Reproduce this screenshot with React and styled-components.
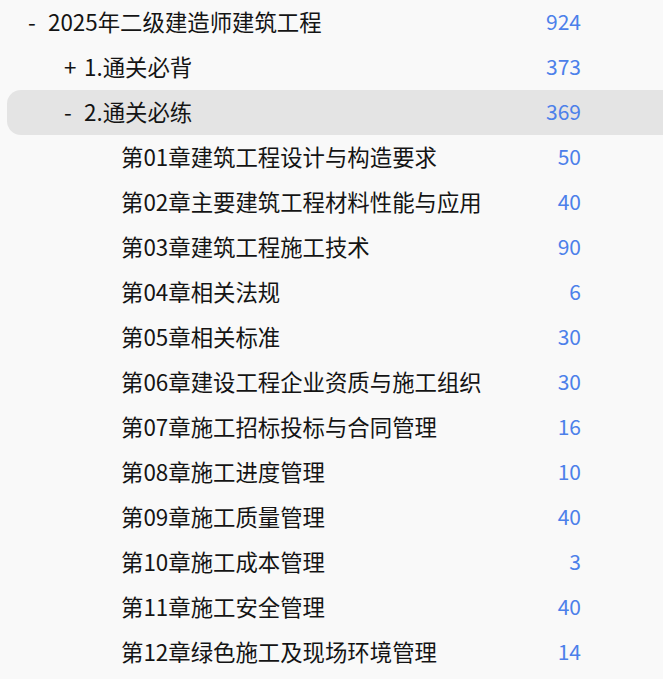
import React from 'react'
import styled, { createGlobalStyle } from 'styled-components'

const GlobalStyle = createGlobalStyle`
  html, body {
    margin: 0;
    padding: 0;
    background: #f9f9f9;
  }
  body {
    font-family: "Noto Sans CJK SC", "Noto Sans", sans-serif;
  }
`

const Tree = styled.ul`
  list-style: none;
  margin: 0;
  padding: 0;
  width: 663px;
  overflow: hidden;
`

const Row = styled.li`
  display: flex;
  align-items: center;
  box-sizing: border-box;
  height: 45px;
  padding-bottom: 4px;
  margin-left: ${p => (p.$active ? '7px' : '0')};
  padding-left: ${p => p.$indent - (p.$active ? 7 : 0)}px;
  padding-right: 82px;
  background: ${p => (p.$active ? '#e4e4e4' : 'transparent')};
  border-radius: ${p => (p.$active ? '14px 0 0 14px' : '0')};
  font-size: 22.4px;
  color: #141414;
`

const Toggle = styled.span`
  width: 20px;
  flex: none;
`

const Label = styled.span`
  flex: 1;
  white-space: nowrap;
`

const Count = styled.span`
  color: #4c80ea;
  font-size: 21px;
`

const chapters = [
  ['第01章建筑工程设计与构造要求', 50],
  ['第02章主要建筑工程材料性能与应用', 40],
  ['第03章建筑工程施工技术', 90],
  ['第04章相关法规', 6],
  ['第05章相关标准', 30],
  ['第06章建设工程企业资质与施工组织', 30],
  ['第07章施工招标投标与合同管理', 16],
  ['第08章施工进度管理', 10],
  ['第09章施工质量管理', 40],
  ['第10章施工成本管理', 3],
  ['第11章施工安全管理', 40],
  ['第12章绿色施工及现场环境管理', 14],
]

const App = () => {
  return (
    <>
      <GlobalStyle />
      <Tree>
        <Row $indent={28}>
          <Toggle>-</Toggle>
          <Label>2025年二级建造师建筑工程</Label>
          <Count>924</Count>
        </Row>
        <Row $indent={64}>
          <Toggle>+</Toggle>
          <Label>1.通关必背</Label>
          <Count>373</Count>
        </Row>
        <Row $indent={64} $active>
          <Toggle>-</Toggle>
          <Label>2.通关必练</Label>
          <Count>369</Count>
        </Row>
        {chapters.map(([name, n]) => (
          <Row key={name} $indent={121}>
            <Label>{name}</Label>
            <Count>{n}</Count>
          </Row>
        ))}
      </Tree>
    </>
  )
}

export default App
